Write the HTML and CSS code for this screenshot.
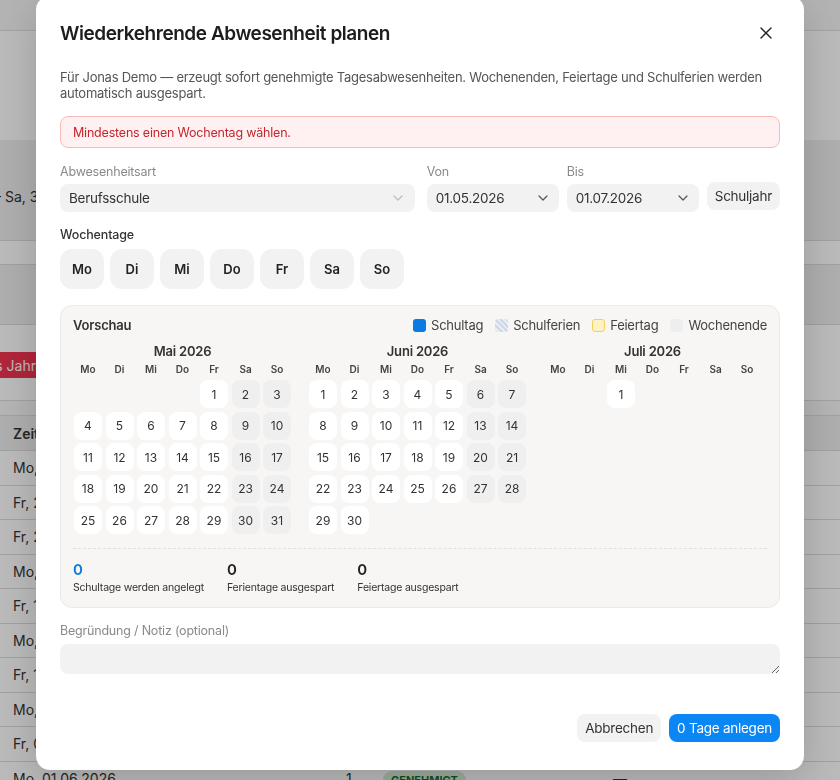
FILE: index.html
```html
<!DOCTYPE html>
<html lang="de">
<head>
  <meta charset="UTF-8" />
  <title>Wiederkehrende Abwesenheit planen</title>
  <link rel="stylesheet" href="styles.css">
</head>
<body>
  <div class="page">
    <div class="page-top"></div>
    <div class="page-intro"></div>
    <div class="period">– Sa, 31.10.2026</div>
    <div class="band-sep"></div>
    <div class="tabs"></div>
    <div class="actions">
      <button class="btn-danger">Ganzes Jahr</button>
    </div>
    <div class="actions-sep"></div>
    <table class="list">
      <colgroup>
        <col class="col-date"><col class="col-days"><col class="col-status"><col>
      </colgroup>
      <thead>
        <tr><th>Zeitraum</th><th></th><th></th><th></th></tr>
      </thead>
      <tbody id="listBody"></tbody>
    </table>
  </div>

  <div class="overlay"></div>

  <div class="modal">
    <div class="modal-head">
      <h2 class="modal-title">Wiederkehrende Abwesenheit planen</h2>
      <button class="close" aria-label="Schließen">
        <svg viewBox="0 0 12 12" width="12" height="12"><path d="M1 1L11 11M11 1L1 11" stroke="#222" stroke-width="1.4" stroke-linecap="round"/></svg>
      </button>
    </div>
    <p class="desc">Für Jonas Demo — erzeugt sofort genehmigte Tagesabwesenheiten. Wochenenden, Feiertage und Schulferien werden automatisch ausgespart.</p>

    <div class="form">
      <div class="alert">Mindestens einen Wochentag wählen.</div>

      <div class="fields">
        <div class="field field-type">
          <label>Abwesenheitsart</label>
          <div class="select">
            <span>Berufsschule</span>
            <svg class="chevron light" viewBox="0 0 10 6" width="10" height="6"><path d="M1 1l4 4 4-4" fill="none" stroke-width="1.2" stroke-linecap="round" stroke-linejoin="round"/></svg>
          </div>
        </div>
        <div class="field field-date">
          <label>Von</label>
          <div class="select">
            <span>01.05.2026</span>
            <svg class="chevron" viewBox="0 0 10 6" width="10" height="6"><path d="M1 1l4 4 4-4" fill="none" stroke-width="1.2" stroke-linecap="round" stroke-linejoin="round"/></svg>
          </div>
        </div>
        <div class="field field-date">
          <label>Bis</label>
          <div class="select">
            <span>01.07.2026</span>
            <svg class="chevron" viewBox="0 0 10 6" width="10" height="6"><path d="M1 1l4 4 4-4" fill="none" stroke-width="1.2" stroke-linecap="round" stroke-linejoin="round"/></svg>
          </div>
        </div>
        <button class="btn-year">Schuljahr</button>
      </div>

      <div>
        <div class="section-label">Wochentage</div>
        <div class="weekdays">
          <button class="day-btn">Mo</button>
          <button class="day-btn">Di</button>
          <button class="day-btn">Mi</button>
          <button class="day-btn">Do</button>
          <button class="day-btn">Fr</button>
          <button class="day-btn">Sa</button>
          <button class="day-btn">So</button>
        </div>
      </div>

      <div class="preview">
        <div class="preview-head">
          <div class="preview-title">Vorschau</div>
          <div class="legend">
            <span class="legend-item"><i class="swatch sw-school"></i>Schultag</span>
            <span class="legend-item"><i class="swatch sw-holiday"></i>Schulferien</span>
            <span class="legend-item"><i class="swatch sw-feast"></i>Feiertag</span>
            <span class="legend-item"><i class="swatch sw-weekend"></i>Wochenende</span>
          </div>
        </div>
        <div class="months" id="months"></div>
        <div class="stats">
          <div class="stat">
            <div class="stat-num blue">0</div>
            <div class="stat-label">Schultage werden angelegt</div>
          </div>
          <div class="stat">
            <div class="stat-num">0</div>
            <div class="stat-label">Ferientage ausgespart</div>
          </div>
          <div class="stat">
            <div class="stat-num">0</div>
            <div class="stat-label">Feiertage ausgespart</div>
          </div>
        </div>
      </div>

      <div class="field">
        <label>Begründung / Notiz (optional)</label>
        <textarea class="note"></textarea>
      </div>
    </div>

    <div class="modal-foot">
      <button class="btn btn-secondary">Abbrechen</button>
      <button class="btn btn-primary">0 Tage anlegen</button>
    </div>
  </div>

  <script>
    const months = [
      { title: "Mai 2026", month: 4, last: 31 },
      { title: "Juni 2026", month: 5, last: 30 },
      { title: "Juli 2026", month: 6, last: 1 }
    ];
    const dayNames = ["Mo", "Di", "Mi", "Do", "Fr", "Sa", "So"];
    const monthsEl = document.getElementById("months");

    months.forEach(m => {
      const wrap = document.createElement("div");
      wrap.className = "month";

      const title = document.createElement("div");
      title.className = "month-title";
      title.textContent = m.title;
      wrap.appendChild(title);

      const head = document.createElement("div");
      head.className = "cal cal-head";
      dayNames.forEach(d => {
        const el = document.createElement("div");
        el.textContent = d;
        head.appendChild(el);
      });
      wrap.appendChild(head);

      const grid = document.createElement("div");
      grid.className = "cal";
      const offset = (new Date(2026, m.month, 1).getDay() + 6) % 7;
      for (let i = 0; i < offset; i++) {
        const empty = document.createElement("div");
        empty.className = "cell empty";
        grid.appendChild(empty);
      }
      for (let d = 1; d <= m.last; d++) {
        const cell = document.createElement("div");
        cell.className = "cell";
        if ((offset + d - 1) % 7 >= 5) cell.classList.add("weekend");
        cell.textContent = d;
        grid.appendChild(cell);
      }
      wrap.appendChild(grid);
      monthsEl.appendChild(wrap);
    });

    const rows = [
      "Mo, 29.06.2026", "Fr, 26.06.2026", "Fr, 22.05.2026", "Mo, 22.06.2026",
      "Fr, 19.06.2026", "Mo, 15.06.2026", "Fr, 12.06.2026", "Mo, 08.06.2026",
      "Fr, 05.06.2026", "Mo, 01.06.2026"
    ];
    const listBody = document.getElementById("listBody");
    rows.forEach(date => {
      const tr = document.createElement("tr");
      tr.innerHTML = `<td>${date}</td><td>1</td><td><span class="badge">GENEHMIGT</span></td><td>—</td>`;
      listBody.appendChild(tr);
    });
  </script>
</body>
</html>
```

FILE: styles.css
```css
* { box-sizing: border-box; }

body {
  margin: 0;
  font-family: Inter, "Noto Sans", sans-serif;
  color: #222;
  background: #fff;
  height: 100vh;
  overflow: hidden;
}

/* page behind the dialog */
.page-top {
  height: 31px;
  background: #f6f6f6;
  border-bottom: 1px solid #dedede;
}

.page-intro {
  height: 109px;
}

.period {
  height: 100px;
  background: #efefef;
  display: flex;
  align-items: center;
  padding-top: 12px;
  margin-left: -6px;
  font-size: 14px;
  color: #333;
}

.band-sep {
  height: 25px;
  border-top: 1px solid #dcdcdc;
  border-bottom: 1px solid #dcdcdc;
}

.tabs {
  height: 60px;
  background: #efefef;
  border-bottom: 1px solid #dcdcdc;
}

.actions {
  height: 75px;
  display: flex;
  align-items: center;
  padding-top: 5px;
}

.btn-danger {
  height: 26px;
  margin-left: -57px;
  padding: 0 10px;
  border: 0;
  border-radius: 6px;
  background: #f2334f;
  color: #fff;
  font: 14px Inter, sans-serif;
}

.actions-sep {
  height: 15px;
  border-top: 1px solid #dcdcdc;
  background: #f7f7f7;
}

.list {
  width: 100%;
  table-layout: fixed;
  border-collapse: collapse;
  font-size: 14px;
  color: #333;
}

.col-date { width: 333px; }
.col-days { width: 37px; }
.col-status { width: 230px; }

.list th {
  height: 35px;
  background: #efefef;
  text-align: left;
  font-weight: 600;
  padding: 0 0 0 13px;
  border-top: 1px solid #dcdcdc;
}

.list td {
  height: 34.5px;
  padding: 0 0 0 13px;
  border-top: 1px solid #dcdcdc;
  white-space: nowrap;
}

.badge {
  background: #d5efd9;
  color: #1c6b35;
  font-size: 11px;
  font-weight: 700;
  padding: 2px 8px;
  border-radius: 999px;
}

.overlay {
  position: fixed;
  inset: 0;
  background: rgba(0, 0, 0, 0.27);
}

/* dialog */
.modal {
  position: fixed;
  top: -4px;
  left: 36px;
  width: 768px;
  background: #fff;
  border-radius: 14px;
  padding: 24px 24px 28px;
  box-shadow: 0 12px 40px rgba(0, 0, 0, 0.18);
}

.modal-head {
  display: flex;
  align-items: center;
  justify-content: space-between;
  height: 28px;
}

.modal-title {
  margin: 0;
  font-size: 19px;
  font-weight: 600;
  line-height: 28px;
  letter-spacing: -0.45px;
  color: #1d1d1f;
}

.close {
  width: 28px;
  height: 28px;
  margin-top: -2px;
  padding: 0;
  border: 0;
  background: none;
  display: flex;
  align-items: center;
  justify-content: center;
}

.desc {
  margin: 21px 0 0;
  font-size: 13px;
  line-height: 16px;
  letter-spacing: -0.25px;
  color: #555;
}

.form {
  display: flex;
  flex-direction: column;
  gap: 15px;
  margin-top: 15px;
}

.alert {
  height: 32px;
  padding: 0 12px;
  display: flex;
  align-items: center;
  background: #fff1f1;
  border: 1px solid #f6bcbc;
  border-radius: 8px;
  color: #c4262e;
  font-size: 12.5px;
  letter-spacing: -0.2px;
}

.fields {
  display: flex;
  align-items: flex-end;
  gap: 8px;
}

.field-type {
  flex: 1;
  margin-right: 4px;
}

.field-date {
  width: 132px;
}

.field label {
  display: block;
  font-size: 12.5px;
  line-height: 16px;
  letter-spacing: -0.2px;
  color: #8a8a8a;
  margin-bottom: 5px;
}

.fields .field label {
  padding-top: 1px;
  margin-bottom: 4px;
}

.select {
  height: 28px;
  padding: 0 11px 0 9px;
  display: flex;
  align-items: center;
  justify-content: space-between;
  background: #f2f2f2;
  border-radius: 8px;
  font-size: 13.5px;
  letter-spacing: -0.25px;
  color: #333;
}

.chevron { stroke: #555; }
.chevron.light { stroke: #bdbdbd; margin-right: 1px; }

.btn-year {
  height: 28px;
  margin-bottom: 2px;
  padding: 0 8px;
  border: 0;
  border-radius: 8px;
  background: #f2f2f2;
  color: #333;
  font: 13.5px Inter, sans-serif;
  letter-spacing: -0.25px;
}

.section-label {
  font-size: 12.5px;
  line-height: 16px;
  font-weight: 500;
  letter-spacing: -0.15px;
  color: #333;
}

.weekdays {
  display: flex;
  gap: 6px;
  margin-top: 6px;
}

.day-btn {
  width: 44px;
  height: 40px;
  border: 0;
  border-radius: 12px;
  background: #f2f2f2;
  color: #222;
  font: 600 13px Inter, sans-serif;
}

/* preview */
.preview {
  margin-top: 1px;
  background: #f7f6f4;
  border: 1px solid #ebe9e6;
  border-radius: 12px;
  padding: 11px 12px 12px;
}

.preview-head {
  display: flex;
  align-items: center;
  justify-content: space-between;
  height: 16px;
}

.preview-title {
  font-size: 13px;
  font-weight: 600;
  letter-spacing: -0.2px;
  color: #333;
}

.legend {
  display: flex;
  gap: 12px;
  font-size: 13px;
  letter-spacing: -0.25px;
  color: #444;
}

.legend-item {
  display: flex;
  align-items: center;
  gap: 5px;
}

.swatch {
  width: 13px;
  height: 13px;
  border-radius: 3px;
  display: inline-block;
}

.sw-school { background: #0a7be0; }
.sw-holiday { background: repeating-linear-gradient(45deg, #cfd8e5 0 2px, #eaeef4 2px 4px); }
.sw-feast { background: #fff3c6; border: 1px solid #f3cf5c; }
.sw-weekend { background: #eeeeee; }

.months {
  display: grid;
  grid-template-columns: repeat(3, 217px);
  column-gap: 18px;
  margin: 10px 0 0 1px;
}

.month-title {
  text-align: center;
  font-size: 13px;
  line-height: 16px;
  font-weight: 600;
  letter-spacing: -0.2px;
  color: #333;
}

.cal {
  display: grid;
  grid-template-columns: repeat(7, 28px);
  gap: 3.5px;
}

.cal-head {
  margin: 4px 0 5px;
  font-size: 10px;
  line-height: 12px;
  font-weight: 600;
  color: #444;
  text-align: center;
}

.cell {
  height: 28px;
  border-radius: 8px;
  display: flex;
  align-items: center;
  justify-content: center;
  background: #fff;
  font-size: 12px;
  color: #333;
}

.cell.weekend { background: #efefef; }
.cell.empty { background: none; }

.stats {
  margin-top: 14px;
  padding-top: 12px;
  border-top: 1px dashed #e2e0dd;
  display: flex;
  gap: 23px;
}

.stat-num {
  font-size: 15px;
  line-height: 18px;
  font-weight: 600;
  color: #222;
}

.stat-num.blue { color: #0a7be0; }

.stat-label {
  margin-top: 2px;
  font-size: 10.5px;
  line-height: 14px;
  letter-spacing: -0.2px;
  color: #333;
}

.note {
  display: block;
  width: 100%;
  height: 30px;
  border: 0;
  border-radius: 8px;
  background: #f2f2f2;
  font: 14px Inter, sans-serif;
}

.modal-foot {
  display: flex;
  justify-content: flex-end;
  gap: 8px;
  margin-top: 40px;
}

.btn {
  height: 28px;
  padding: 0 8px;
  border: 0;
  border-radius: 8px;
  font: 13.5px Inter, sans-serif;
  letter-spacing: -0.25px;
}

.btn-secondary {
  background: #f2f2f2;
  color: #333;
}

.btn-primary {
  background: #0b87f5;
  color: #fff;
}
```
